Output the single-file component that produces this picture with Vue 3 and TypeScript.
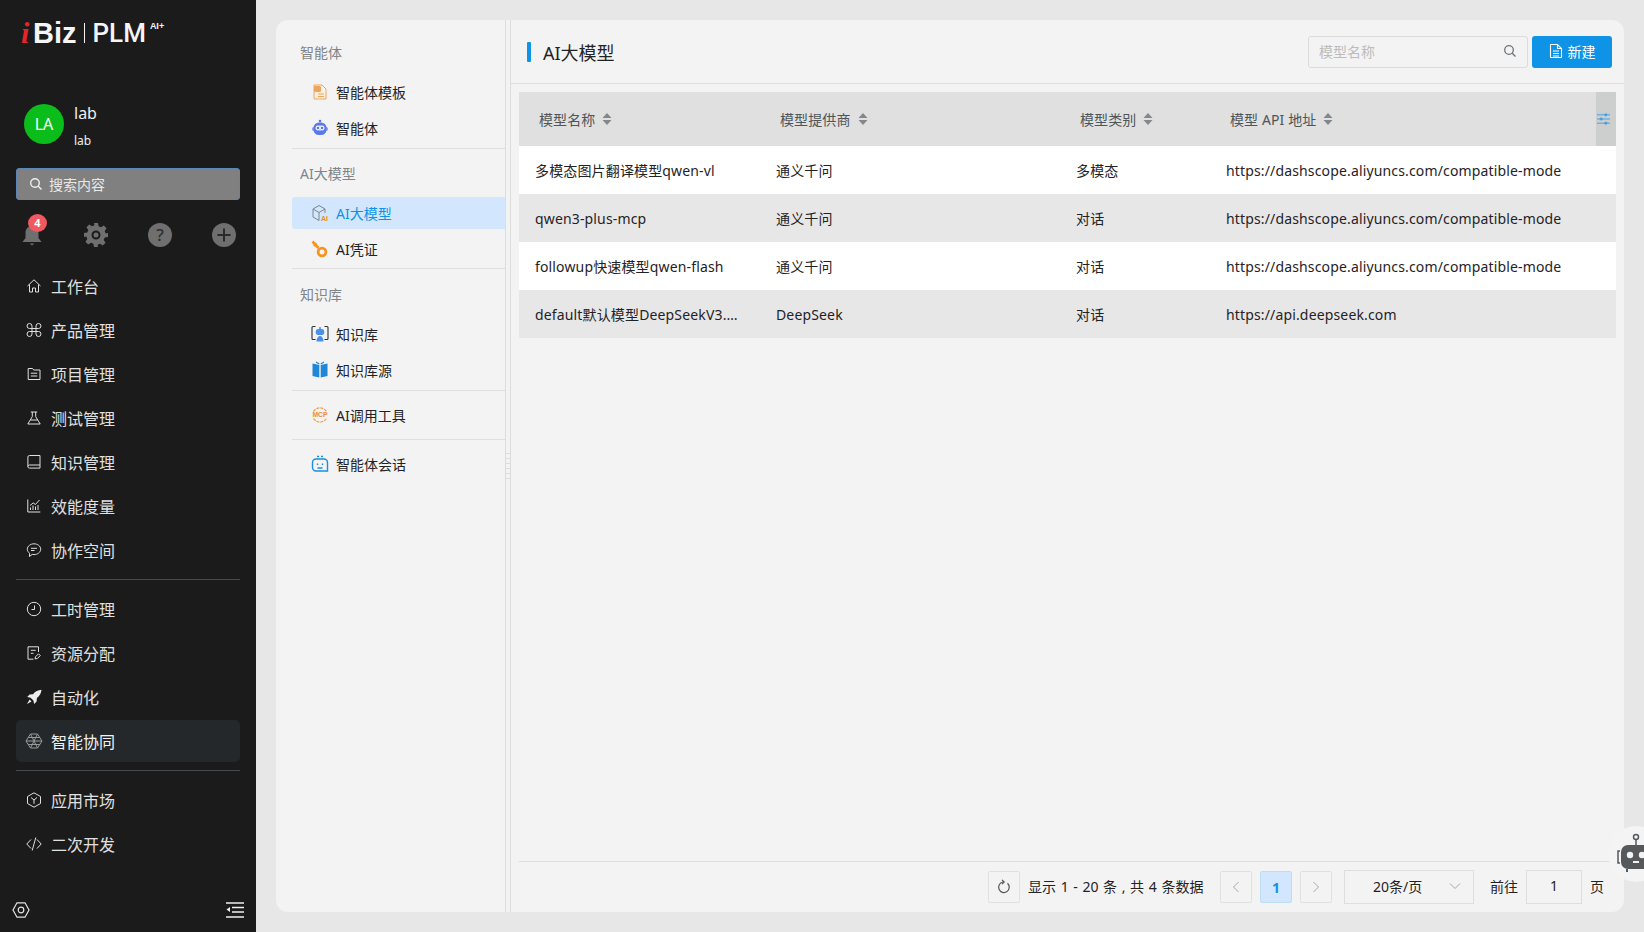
<script setup lang="ts">
interface NavItem {
  label: string;
  d: string;
  filled?: boolean;
  active?: boolean;
}

const navGroups: NavItem[][] = [
  [
    { label: '工作台', d: 'M1.5 8 8 1.8 14.5 8M3.5 6.5V14H6.5V10H9.5V14H12.500V6.500' },
    { label: '产品管理', d: 'M6 6V4a2.500 2.500 0 1 0-2.500 2.500h9A2.500 2.500 0 1 0 10 4v8a2.500 2.500 0 1 0 2.500-2.500h-9A2.500 2.500 0 1 0 6 12V6z' },
    { label: '项目管理', d: 'M2.200 2.500h4.300l1.200 1.500h6.300v9.500H2.200zM4.800 7.200h6.400M4.800 10h6.400' },
    { label: '测试管理', d: 'M4.800 2h6.400M6.300 2v4.600L1.800 14h12.400L9.700 6.600V2M4.400 10h7.200' },
    { label: '知识管理', d: 'M14 1.500H3.500A1.600 1.600 0 0 0 1.900 3.100v9.400a1.600 1.600 0 0 0 1.600 1.600H14zM1.900 12.400A1.500 1.500 0 0 1 3.500 11H14' },
    { label: '效能度量', d: 'M1.800 1.500v12.500h12.500M4.500 12V9.500M7 12V7.500M9.500 12V8.500M12 12V7M4 7.500l3.200-2.600 2.200 1.600L13.500 2' },
    { label: '协作空间', d: 'M8 1.800c3.600 0 6.700 2.400 6.700 5.400s-3.100 5.400-6.700 5.400c-.6 0-1.200-.1-1.800-.2L3.400 14.500l.3-3.100C2.300 10.400 1.300 8.900 1.300 7.200 1.300 4.200 4.400 1.800 8 1.800zM5 6.300h6M5 8.500h3.500' },
  ],
  [
    { label: '工时管理', d: 'M8 1.300a6.700 6.700 0 1 0 0 13.400A6.700 6.700 0 0 0 8 1.300zM8.500 4.500v4H5.500' },
    { label: '资源分配', d: 'M12.500 7V1.800H2v12.400h5.500M4.800 5.300h5M4.800 8.300h2.700M9 13.800l.5-2 3-3 1.800 1.800-3 3z' },
    { label: '自动化', d: 'M15.500 .8c-3.400.2-6.200 1.700-8.500 4.400L3.600 5.600 1.200 8l3.400.8 2.800 2.800.7 3.300 2.500-2.400.3-3.400C13.800 6.800 15.300 4.100 15.500 .8zM3.600 10.500 1 15l4.500-2.500z', filled: true },
    { label: '智能协同', d: 'M4.500 1h7L16 8l-4.500 7h-7L0 8zM4.500 1l7 14M11.500 1l-7 14M0 8h16M2.200 4.500h11.600M2.200 11.500h11.600', active: true },
  ],
  [
    { label: '应用市场', d: 'M8 .8l6.500 3.700v7L8 15.200l-6.500-3.700v-7zM5 5.500 8 8l3-2.500M8 8v3.800' },
    { label: '二次开发', d: 'M5 3.500.8 8 5 12.500M11 3.500 15.200 8 11 12.500M9.800 1.500 6.200 14.500' },
  ],
];

interface SideItem {
  label: string;
  icon: string;
  active?: boolean;
}

interface SideGroup {
  title?: string;
  items: SideItem[];
}

const sideGroups: SideGroup[] = [
  { title: '智能体', items: [{ label: '智能体模板', icon: 'template' }, { label: '智能体', icon: 'robot' }] },
  { title: 'AI大模型', items: [{ label: 'AI大模型', icon: 'cube', active: true }, { label: 'AI凭证', icon: 'key' }] },
  { title: '知识库', items: [{ label: '知识库', icon: 'kb' }, { label: '知识库源', icon: 'book' }] },
  { items: [{ label: 'AI调用工具', icon: 'mcp' }] },
  { items: [{ label: '智能体会话', icon: 'chat' }] },
];

const columns = ['模型名称', '模型提供商', '模型类别', '模型 API 地址'];

const rows = [
  ['多模态图片翻译模型qwen-vl', '通义千问', '多模态', 'https://dashscope.aliyuncs.com/compatible-mode'],
  ['qwen3-plus-mcp', '通义千问', '对话', 'https://dashscope.aliyuncs.com/compatible-mode'],
  ['followup快速模型qwen-flash', '通义千问', '对话', 'https://dashscope.aliyuncs.com/compatible-mode'],
  ['default默认模型DeepSeekV3.2-Exp', 'DeepSeek', '对话', 'https://api.deepseek.com'],
];
</script>

<template>
  <div class="page">
    <aside class="nav">
      <div class="logo">
        <span class="logo-i">i</span><span class="logo-biz">Biz</span><span class="logo-line"></span><span class="logo-plm">PLM</span><span class="logo-ai">AI+</span>
      </div>
      <div class="user">
        <div class="avatar">LA</div>
        <div class="user-text">
          <div class="user-name">lab</div>
          <div class="user-sub">lab</div>
        </div>
      </div>
      <div class="nav-search">
        <svg width="14" height="14" viewBox="0 0 14 14" fill="none" stroke="#eee" stroke-width="1.400"><circle cx="6" cy="6" r="4.300" /><path d="M9.200 9.200 12.500 12.500" /></svg>
        <span>搜索内容</span>
      </div>
      <div class="tools">
        <div class="tool bell">
          <svg width="24" height="24" viewBox="0 0 24 24" fill="#6f6f6f"><path d="M12 3c-4 0-6.500 3-6.500 7v5L2.500 19h19l-3-4v-5c0-4-2.500-7-6.500-7z" /><path d="M9.500 20.500h5l-2.500 2z" /></svg>
          <span class="badge">4</span>
        </div>
        <svg class="tool" width="24" height="24" viewBox="0 0 24 24" fill="#6f6f6f"><path fill-rule="evenodd" d="M10 0h4l.6 3.300 2.400 1 2.800-1.900 2.800 2.800-1.900 2.800 1 2.400L24 10v4l-3.300.6-1 2.400 1.900 2.800-2.800 2.800-2.800-1.900-2.400 1L14 24h-4l-.6-3.300-2.400-1-2.800 1.900-2.800-2.800 1.900-2.800-1-2.400L0 14v-4l3.300-.6 1-2.400-1.900-2.800 2.800-2.800 2.800 1.900 2.400-1zM12 7.500a4.500 4.500 0 1 0 0 9 4.500 4.500 0 0 0 0-9z" /><circle cx="12" cy="12" r="2.500" /></svg>
        <div class="tool round">?</div>
        <svg class="tool" width="24" height="24" viewBox="0 0 24 24"><circle cx="12" cy="12" r="12" fill="#6f6f6f" /><path d="M12 5.500v13M5.500 12h13" stroke="#2a2a2a" stroke-width="2" /></svg>
      </div>
      <template v-for="(group, i) in navGroups" :key="i">
        <div class="nav-group">
          <div v-for="item in group" :key="item.label" class="nav-item" :class="{ active: item.active }">
            <svg width="16" height="16" viewBox="0 0 16 16" :fill="item.filled ? '#ececec' : 'none'" :stroke="item.filled ? 'none' : item.active ? '#9a9a9a' : '#e0e0e0'" stroke-width="1" class="nav-icon"><path :d="item.d" /></svg>
            <span>{{ item.label }}</span>
          </div>
        </div>
        <div v-if="i < navGroups.length - 1" class="nav-divider"></div>
      </template>
      <div class="nav-foot">
        <svg width="18" height="18" viewBox="0 0 18 18" fill="none" stroke="#e4e4e4" stroke-width="1.200"><path d="M5 1.800h8L17 9l-4 7.200H5L1 9z" /><circle cx="9" cy="9" r="2.800" /></svg>
        <svg width="18" height="16" viewBox="0 0 18 16" fill="none" stroke="#f0f0f0" stroke-width="1.600"><path d="M0 1h18M6 5.500h12M6 10h12M0 15h18" /><path d="M4 5v5L.5 7.500z" fill="#f0f0f0" stroke="none" /></svg>
      </div>
    </aside>

    <main class="content">
      <div class="card">
        <section class="side">
          <div v-for="(group, i) in sideGroups" :key="i" class="side-group">
            <div v-if="group.title" class="side-title">{{ group.title }}</div>
            <div v-for="item in group.items" :key="item.label" class="side-item" :class="{ active: item.active }">
              <svg class="side-icon" width="18" height="18" viewBox="0 0 18 18" fill="none">
                <template v-if="item.icon === 'template'">
                  <path d="M3 2h8l4 4v10H3z" fill="#fdf1e3" stroke="#f0a35a" />
                  <rect x="3" y="3" width="7" height="6" rx="1.500" fill="#f0a35a" />
                  <path d="M7 11h6M7 13.500h6" stroke="#f0a35a" />
                </template>
                <template v-else-if="item.icon === 'robot'">
                  <circle cx="9" cy="2" r="1.300" fill="#5a78ee" />
                  <rect x="1" y="8" width="16" height="4" rx="2" fill="#7f96f5" />
                  <rect x="2.500" y="3.500" width="13" height="12.500" rx="5.500" fill="#5a78ee" />
                  <rect x="4.500" y="6.500" width="9" height="5" rx="2.200" fill="#dfe5ff" />
                  <circle cx="7" cy="9" r="1" fill="#3c55c8" />
                  <circle cx="11" cy="9" r="1" fill="#3c55c8" />
                </template>
                <template v-else-if="item.icon === 'cube'">
                  <path d="M8 1.500 14 5v4M8 1.500 2 5v8l6 3.500M2 5l6 3.500V16.500M8 8.500 14 5" stroke="#7b858c" />
                  <text x="10" y="16.500" font-size="7" font-weight="700" fill="#f08a24" font-family="Liberation Sans, sans-serif">AI</text>
                </template>
                <template v-else-if="item.icon === 'key'">
                  <path d="M1.500 1.500 7.500 8" stroke="#f7941e" stroke-width="2.600" />
                  <path d="M2.800 6 5.500 3.300" stroke="#f7941e" stroke-width="2.200" />
                  <circle cx="11" cy="12" r="3.900" stroke="#f7941e" stroke-width="2.800" />
                </template>
                <template v-else-if="item.icon === 'kb'">
                  <path d="M4.500 1.500H2a1 1 0 0 0-1 1v11a1 1 0 0 0 1 1h2.500M13.500 1.500H16a1 1 0 0 1 1 1v11a1 1 0 0 1-1 1h-2.500" stroke="#24303c" stroke-width="1.100" />
                  <circle cx="9" cy="3" r="1.100" fill="#4a90e8" />
                  <rect x="4.800" y="4" width="8.400" height="6" rx="2.500" fill="#4a90e8" />
                  <path d="M5.500 16.500c0-3 1.500-5.500 3.500-5.500s3.500 2.500 3.500 5.500z" fill="#4a90e8" />
                </template>
                <template v-else-if="item.icon === 'book'">
                  <path d="M1.500 2.500 8.300 4v12.500L1.500 15zM16.500 2.500 9.700 4v12.500l6.800-1.500z" fill="#1f86d8" />
                  <path d="M5 1 8.300 3M13 1 9.700 3" stroke="#1f86d8" stroke-width="1.200" />
                </template>
                <template v-else-if="item.icon === 'mcp'">
                  <path d="M2.500 5.500a7.700 7.700 0 0 1 13 0M2.500 12.500a7.700 7.700 0 0 0 13 0" stroke="#ef9a4c" stroke-width="1.200" stroke-dasharray="3 1" />
                  <text x="9" y="11.200" text-anchor="middle" font-size="6.800" font-weight="700" fill="#ef8a34" font-family="Liberation Sans, sans-serif">MCP</text>
                </template>
                <template v-else>
                  <path d="M5 4h8a3.500 3.500 0 0 1 3.500 3.500v8.500H5a3.500 3.500 0 0 1-3.500-3.500v-5A3.500 3.500 0 0 1 5 4z" stroke="#1a8fe0" stroke-width="1.400" />
                  <path d="M6 1.500h6" stroke="#1a8fe0" stroke-width="1.400" stroke-dasharray="2 2" />
                  <path d="M6.500 8.500v1.500M11.500 8.500v1.500M6.500 13h5" stroke="#1a8fe0" stroke-width="1.400" />
                </template>
              </svg>
              <span>{{ item.label }}</span>
            </div>
          </div>
        </section>
        <div class="splitter"><span class="grip"></span></div>
        <section class="panel">
          <header class="panel-head">
            <span class="bar"></span>
            <h1 class="panel-title">AI大模型</h1>
            <div class="search">
              <span>模型名称</span>
              <svg width="14" height="14" viewBox="0 0 14 14" fill="none" stroke="#6f7479" stroke-width="1.300"><circle cx="6" cy="6" r="4.300" /><path d="M9.200 9.200 12.500 12.500" /></svg>
            </div>
            <button class="new-btn">
              <svg width="14" height="16" viewBox="0 0 14 16" fill="none" stroke="#fff" stroke-width="1.100"><path d="M1.500 1.500h7l4 4v9h-11zM8.500 1.500v4h4M4 8h6M4 10.500h6M4 13h6" /></svg>
              新建
            </button>
          </header>
          <div class="table">
            <div class="row head-row">
              <div v-for="col in columns" :key="col" class="th">
                <span>{{ col }}</span>
                <svg width="10" height="14" viewBox="0 0 10 14" fill="#83888c"><path d="M5 1 9.500 6h-9zM5 13 .5 8h9z" /></svg>
              </div>
              <div class="col-set">
                <svg width="13" height="14" viewBox="0 0 14 14" fill="none" stroke="#3ea0e6" stroke-width="1"><path d="M0 2.500h14M0 7h14M0 11.500h14" /><circle cx="9.500" cy="2.500" r="1.200" fill="#3ea0e6" /><circle cx="4.500" cy="7" r="1.200" fill="#3ea0e6" /><circle cx="9.500" cy="11.500" r="1.200" fill="#3ea0e6" /></svg>
              </div>
            </div>
            <div v-for="(row, r) in rows" :key="r" class="row body-row">
              <div v-for="(cell, c) in row" :key="c" class="td">{{ cell }}</div>
            </div>
          </div>
          <footer class="pager">
            <button class="pg-btn">
              <svg width="16" height="16" viewBox="0 0 16 16" fill="none" stroke="#555" stroke-width="1.200"><path d="M11.500 4.300A5.300 5.300 0 1 1 7 3" /><path d="M6 .8 8.200 3 6 5.200" /></svg>
            </button>
            <span class="pg-info">显示 1 - 20 条 , 共 4 条数据</span>
            <button class="pg-btn prev">
              <svg width="8" height="12" viewBox="0 0 8 12" fill="none" stroke="#a8a8a8"><path d="M6.500 1 1.500 6l5 5" /></svg>
            </button>
            <button class="pg-btn current">1</button>
            <button class="pg-btn">
              <svg width="8" height="12" viewBox="0 0 8 12" fill="none" stroke="#a8a8a8"><path d="M1.500 1l5 5-5 5" /></svg>
            </button>
            <div class="pg-size">
              <span>20条/页</span>
              <svg width="12" height="8" viewBox="0 0 12 8" fill="none" stroke="#a8a8a8"><path d="M1 1.500 6 6.500 11 1.500" /></svg>
            </div>
            <span class="pg-go">前往</span>
            <div class="pg-input">1</div>
            <span class="pg-unit">页</span>
          </footer>
        </section>
      </div>
    </main>

    <div class="assistant">
      <svg width="40" height="44" viewBox="0 0 40 44" fill="none">
        <circle cx="20" cy="5" r="2.500" stroke="#55595c" stroke-width="1.500" />
        <path d="M20 7.500V13" stroke="#55595c" stroke-width="1.500" />
        <rect x="5" y="13" width="30" height="24" rx="7" fill="#55595c" />
        <path d="M4 19H2v12h2M36 19h2v12h-2" stroke="#55595c" stroke-width="1.500" />
        <circle cx="14" cy="23" r="3.200" fill="#f2f2f2" />
        <circle cx="26" cy="23" r="3.200" fill="#f2f2f2" />
        <rect x="17" y="29" width="6" height="2" fill="#f2f2f2" />
        <path d="M11 37v3M29 37v3" stroke="#55595c" stroke-width="2" />
      </svg>
    </div>
  </div>
</template>

<style>
html,
body {
  margin: 0;
  overflow: hidden;
}
</style>

<style scoped>
.page {
  position: relative;
  display: flex;
  width: 1644px;
  height: 932px;
  overflow: hidden;
  background: #e7e7e7;
  font-family: "Noto Sans", "Noto Sans CJK SC", sans-serif;
  font-size: 14px;
  color: #1f2326;
}

.nav {
  display: flex;
  flex-direction: column;
  flex: none;
  width: 256px;
  height: 932px;
  box-sizing: border-box;
  padding: 0 16px;
  background: #1b1b1b;
  color: #e4e4e4;
}

.logo {
  display: flex;
  align-items: flex-start;
  height: 44px;
  margin: 18px 0 0 5px;
  color: #f5f5f5;
  font-family: "Liberation Sans", sans-serif;
  line-height: 30px;
}

.logo-i {
  width: 12px;
  color: #e3262b;
  font-family: "Liberation Serif", serif;
  font-size: 30px;
  font-style: italic;
  font-weight: 700;
}

.logo-biz {
  font-size: 29px;
  font-weight: 700;
}

.logo-line {
  width: 1px;
  height: 20px;
  margin: 5px 8px 0 7px;
  background: #f5f5f5;
}

.logo-plm {
  font-family: Roboto, sans-serif;
  font-size: 26px;
  font-weight: 500;
}

.logo-ai {
  margin-left: 4px;
  font-size: 9px;
  font-weight: 700;
  line-height: 16px;
}

.user {
  display: flex;
  align-items: center;
  gap: 10px;
  height: 50px;
  margin: 37px 0 0 8px;
}

.avatar {
  display: flex;
  align-items: center;
  justify-content: center;
  width: 40px;
  height: 40px;
  border-radius: 50%;
  background: #0bbd1b;
  color: #fff;
  font-size: 16px;
}

.user-text {
  padding-top: 4px;
}

.user-name {
  font-size: 16px;
  line-height: 22px;
  color: #f0f0f0;
}

.user-sub {
  margin-top: 8px;
  font-size: 12px;
  line-height: 18px;
  color: #f0f0f0;
}

.nav-search {
  display: flex;
  align-items: center;
  gap: 6px;
  height: 32px;
  margin-top: 19px;
  box-sizing: border-box;
  padding: 0 0 1px 12px;
  border: 1px solid #5a87b5;
  border-radius: 3px;
  background: #808080;
  color: #e8e8e8;
}

.tools {
  display: flex;
  align-items: center;
  justify-content: space-between;
  height: 24px;
  margin-top: 23px;
  padding: 0 4px;
}

.tool {
  flex: none;
  width: 24px;
  height: 24px;
}

.bell {
  position: relative;
}

.badge {
  position: absolute;
  top: -9px;
  left: 8px;
  width: 19px;
  height: 18px;
  border-radius: 50%;
  background: #f0595f;
  color: #fff;
  font-size: 11px;
  font-weight: 700;
  line-height: 18px;
  text-align: center;
}

.round {
  border-radius: 50%;
  background: #6f6f6f;
  color: #2e2e2e;
  font-size: 17px;
  font-weight: 500;
  line-height: 24px;
  text-align: center;
}

.nav-group {
  display: flex;
  flex-direction: column;
  gap: 2px;
}

.tools + .nav-group {
  margin-top: 18px;
}

.nav-item {
  display: flex;
  align-items: center;
  gap: 9px;
  height: 42px;
  box-sizing: border-box;
  padding-left: 10px;
  border-radius: 5px;
  font-size: 16px;
  color: #e0e0e0;
}

.nav-item.active {
  background: #24282a;
  color: #f2f2f2;
}

.nav-icon {
  flex: none;
  overflow: visible;
}

.nav-divider {
  flex: none;
  height: 1px;
  margin: 8px 0;
  background: #444a50;
}

.nav-foot {
  display: flex;
  align-items: center;
  justify-content: space-between;
  margin: auto -4px 13px -4px;
}

.content {
  flex: 1;
  min-width: 0;
  padding: 20px;
  box-sizing: border-box;
}

.card {
  display: flex;
  height: 892px;
  border-radius: 12px;
  background: #f3f3f3;
  overflow: hidden;
}

.side {
  flex: none;
  width: 229px;
  box-sizing: border-box;
  padding: 9px 0 0 16px;
}

.side-group {
  padding-top: 6px;
  border-bottom: 1px solid #dedede;
}

.side-group:nth-child(2) {
  padding-top: 7px;
}

.side-group:nth-child(3) {
  padding-top: 8px;
}

.side-group:nth-child(4),
.side-group:nth-child(5) {
  padding: 8px 0;
}

.side-group:last-child {
  border-bottom: none;
}

.side-title {
  height: 36px;
  margin-bottom: 5px;
  padding-left: 8px;
  color: #7f8589;
  line-height: 36px;
}

.side-item {
  display: flex;
  align-items: center;
  gap: 7px;
  height: 32px;
  margin-bottom: 4px;
  box-sizing: border-box;
  padding-left: 19px;
  border-radius: 3px 0 0 3px;
}

.side-group:nth-child(2) .side-item:last-child {
  margin-bottom: 3px;
}

.side-group:nth-child(4) .side-item,
.side-group:nth-child(5) .side-item {
  margin-bottom: 0;
}

.side-item.active {
  background: #d2e7fd;
  color: #0f93e6;
}

.side-icon {
  flex: none;
}

.splitter {
  position: relative;
  flex: none;
  width: 4px;
  border-right: 1px solid #dcdcdc;
  border-left: 1px solid #dcdcdc;
}

.grip {
  position: absolute;
  top: 433px;
  left: 0;
  width: 4px;
  height: 30px;
  background: repeating-linear-gradient(#dcdcdc 0 1px, transparent 1px 5px);
}

.panel {
  display: flex;
  flex-direction: column;
  flex: 1;
  min-width: 0;
}

.panel-head {
  display: flex;
  align-items: center;
  flex: none;
  height: 64px;
  box-sizing: border-box;
  padding-right: 12px;
  padding-left: 16px;
  border-bottom: 1px solid #dedede;
}

.bar {
  width: 4px;
  height: 20px;
  border-radius: 1px;
  background: #0f93e6;
}

.panel-title {
  flex: 1;
  margin: 0 0 0 12px;
  font-size: 18px;
  font-weight: 400;
  color: #1f2326;
}

.search {
  display: flex;
  align-items: center;
  justify-content: space-between;
  width: 220px;
  height: 32px;
  box-sizing: border-box;
  padding: 0 10px 2px;
  border: 1px solid #dcdcdc;
  border-radius: 3px;
  color: #bcbcbc;
}

.new-btn {
  display: flex;
  align-items: center;
  justify-content: center;
  gap: 5px;
  width: 80px;
  height: 32px;
  margin-left: 4px;
  padding: 0 0 2px;
  border: none;
  border-radius: 3px;
  background: #0f93e6;
  color: #fff;
  font: inherit;
}

.table {
  flex: 1;
  margin: 8px 8px 0;
}

.row {
  display: grid;
  grid-template-columns: 241px 300px 150px 1fr;
}

.head-row {
  position: relative;
  height: 54px;
  background: #dfe0df;
  color: #4f5559;
}

.th {
  display: flex;
  align-items: center;
  gap: 7px;
  padding-left: 20px;
  letter-spacing: 0.1px;
}

.col-set {
  position: absolute;
  top: 0;
  right: 0;
  display: flex;
  align-items: center;
  width: 20px;
  height: 54px;
  box-sizing: border-box;
  padding-left: 1px;
  background: #cdcfce;
}

.body-row {
  height: 48px;
  background: #fff;
}

.body-row:nth-child(odd) {
  background: #e7e7e7;
}

.td {
  height: 48px;
  padding: 0 16px;
  overflow: hidden;
  letter-spacing: 0.15px;
  line-height: 50px;
  text-overflow: ellipsis;
  white-space: nowrap;
}

.pager {
  display: flex;
  align-items: center;
  flex: none;
  height: 50px;
  margin: 0 8px;
  padding-left: 469px;
  border-top: 1px solid #dedede;
}

.pg-btn {
  display: flex;
  align-items: center;
  justify-content: center;
  width: 32px;
  height: 32px;
  margin-right: 8px;
  padding: 0;
  box-sizing: border-box;
  border: 1px solid #e0e0e0;
  border-radius: 2px;
  background: transparent;
  font: inherit;
}

.pg-btn.prev {
  margin-left: 8px;
}

.pg-btn.current {
  border-color: #bfdcf5;
  background: #d2e7fd;
  color: #0f93e6;
  font-weight: 700;
}

.pg-info {
  width: 184px;
  margin-bottom: 2px;
  word-spacing: 1px;
  white-space: nowrap;
}

.pg-size {
  display: flex;
  align-items: center;
  justify-content: space-between;
  width: 130px;
  height: 34px;
  margin-left: 4px;
  box-sizing: border-box;
  padding: 0 12px 2px 28px;
  border: 1px solid #dedede;
}

.pg-go {
  margin-bottom: 2px;
  margin-left: 16px;
}

.pg-input {
  width: 56px;
  height: 34px;
  margin-left: 8px;
  box-sizing: border-box;
  border: 1px solid #dedede;
  line-height: 30px;
  text-align: center;
}

.pg-unit {
  margin-bottom: 2px;
  margin-left: 8px;
}

.assistant {
  position: absolute;
  top: 826px;
  left: 1608px;
  display: flex;
  align-items: center;
  width: 56px;
  height: 56px;
  box-sizing: border-box;
  padding-left: 8px;
  border-radius: 50%;
  background: #f4f4f4;
}
</style>
